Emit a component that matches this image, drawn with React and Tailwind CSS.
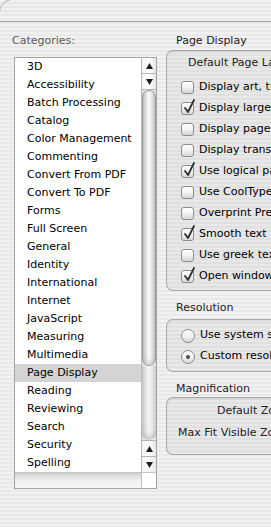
import React from "react";

const categories = [
  "3D",
  "Accessibility",
  "Batch Processing",
  "Catalog",
  "Color Management",
  "Commenting",
  "Convert From PDF",
  "Convert To PDF",
  "Forms",
  "Full Screen",
  "General",
  "Identity",
  "International",
  "Internet",
  "JavaScript",
  "Measuring",
  "Multimedia",
  "Page Display",
  "Reading",
  "Reviewing",
  "Search",
  "Security",
  "Spelling",
];

const checks = [
  ["Display art, trim & bleed boxes", false],
  ["Display large images", true],
  ["Display page to edge", false],
  ["Display transparency grid", false],
  ["Use logical page numbers", true],
  ["Use CoolType", false],
  ["Overprint Preview", false],
  ["Smooth text", true],
  ["Use greek text below", false],
  ["Open windows", true],
];

function Check({ on }) {
  return (
    <span className="relative flex h-[13px] w-[13px] shrink-0 rounded-[3px] border border-[#8c8c8c] bg-gradient-to-b from-white via-[#f2f2f2] to-[#d6d6d6] shadow-[inset_0_1px_1px_rgba(255,255,255,0.9)]">
      {on && (
        <svg className="absolute left-[1px] top-[-4px]" width="13" height="15" viewBox="0 0 13 15">
          <path d="M2 9 L5 13 L11 1" fill="none" stroke="#2a2a2a" strokeWidth="1.7" strokeLinecap="round" strokeLinejoin="round" />
        </svg>
      )}
    </span>
  );
}

function Radio({ on }) {
  return (
    <span className="flex h-[14px] w-[14px] shrink-0 items-center justify-center rounded-full border border-[#8c8c8c] bg-gradient-to-b from-white via-[#f2f2f2] to-[#d6d6d6]">
      {on && <span className="h-[4px] w-[4px] rounded-full bg-[#4a4a4a]" />}
    </span>
  );
}

function Arrow({ up }) {
  return (
    <div className="flex h-[15px] items-center justify-center bg-gradient-to-r from-[#f4f4f4] via-white to-[#e6e6e6]">
      <svg width="7" height="6" viewBox="0 0 7 6">
        <path d={up ? "M3.5 0 L7 6 L0 6 Z" : "M0 0 L7 0 L3.5 6 Z"} fill="#1e1e1e" />
      </svg>
    </div>
  );
}

function Arrows() {
  return (
    <div className="flex flex-col">
      <Arrow up />
      <div className="h-[1px] bg-[#b4b4b4]" />
      <Arrow />
    </div>
  );
}

function Group({ children, className }) {
  return (
    <div className={"w-[140px] rounded-l-[7px] border border-r-0 border-[#a9a9a9] bg-black/[0.035] shadow-[inset_0_1px_2px_rgba(0,0,0,0.08)] " + (className || "")}>
      {children}
    </div>
  );
}

export default function App() {
  return (
    <div className="flex h-[527px] w-[271px] flex-col overflow-hidden bg-[repeating-linear-gradient(180deg,#f1f1f1_0px,#f1f1f1_2px,#e9e9e9_2px,#e9e9e9_4px)] font-['DejaVu_Sans',sans-serif] text-[11px] text-black">
      <div className="h-[22px] shrink-0 border-b border-[#9f9f9f]">
        <div className="ml-[-1px] mt-[-1px] h-[30px] w-[60px] rounded-tl-[14px] border-l border-t border-[#b9b9b9]" />
      </div>

      <div className="flex">
        <div className="w-[166px] shrink-0 pl-[14px]">
          <div className="mt-[12px] h-[14px] pl-[-2px] leading-[14px] text-[#5c5c5c] -ml-[2px]">Categories:</div>
          <div className="mt-[9px] w-[143px] border border-[#a3a3a3] bg-white">
            <div className="flex">
              <div className="flex w-[126px] flex-col">
                {categories.map((c) => (
                  <div
                    key={c}
                    className={"flex h-[18px] items-center whitespace-nowrap pl-[12px] " + (c === "Page Display" ? "bg-[#d4d4d4]" : "")}
                  >
                    {c}
                  </div>
                ))}
              </div>
              <div className="flex w-[15px] flex-col border-l border-[#b9b9b9] bg-gradient-to-r from-[#dcdcdc] via-[#f7f7f7] to-[#e2e2e2]">
                <Arrows />
                <div className="h-[1px] bg-[#b4b4b4]" />
                <div className="mx-[0px] h-[276px] rounded-full border border-[#9a9a9a] bg-gradient-to-r from-[#c9c9c9] via-[#fbfbfb] to-[#cfcfcf] shadow-[inset_0_-3px_4px_rgba(0,0,0,0.12)]" />
                <div className="h-[74px] rounded-b-full bg-gradient-to-r from-[#d2d2d2] via-[#f5f5f5] to-[#dadada] shadow-[inset_0_-4px_5px_rgba(0,0,0,0.15)]" />
                <div className="h-[1px] bg-[#b4b4b4]" />
                <Arrows />
              </div>
            </div>
            <div className="flex h-[16px] border-t border-[#c4c4c4]">
              <div className="w-[126px] bg-gradient-to-b from-[#cfcfcf] via-[#efefef] to-[#f6f6f6]" />
              <div className="w-[15px] border-l border-[#c4c4c4] bg-white" />
            </div>
          </div>
        </div>

        <div className="flex flex-1 flex-col">
          <div className="mt-[12px] h-[14px] pl-[10px] leading-[14px] text-[#222]">Page Display</div>
          <Group className="mt-[2px] h-[241px]">
            <div className="mt-[2px] flex h-[21px] items-center whitespace-nowrap pl-[21px] text-[#222]">Default Page Layout:</div>
            <div className="mt-[3px] flex flex-col">
              {checks.map(([label, on]) => (
                <div key={label} className="flex h-[21px] items-center gap-[5px] whitespace-nowrap pl-[14px]">
                  <Check on={on} />
                  <span>{label}</span>
                </div>
              ))}
            </div>
          </Group>

          <div className="mt-[10px] h-[14px] pl-[10px] leading-[14px] text-[#222]">Resolution</div>
          <Group className="mt-[4px] h-[53px] pt-[5px]">
            <div className="flex h-[21px] items-center gap-[5px] whitespace-nowrap pl-[14px]">
              <Radio />
              <span>Use system setting</span>
            </div>
            <div className="flex h-[21px] items-center gap-[5px] whitespace-nowrap pl-[14px]">
              <Radio on />
              <span>Custom resolution</span>
            </div>
          </Group>

          <div className="mt-[10px] h-[14px] pl-[10px] leading-[14px] text-[#222]">Magnification</div>
          <Group className="mt-[1px] h-[58px] pt-[3px]">
            <div className="flex h-[21px] items-center whitespace-nowrap pl-[50px] text-[#222]">Default Zoom:</div>
            <div className="mt-[1px] flex h-[21px] items-center whitespace-nowrap pl-[11px] text-[#222]">Max Fit Visible Zoom:</div>
          </Group>
        </div>
      </div>
    </div>
  );
}
